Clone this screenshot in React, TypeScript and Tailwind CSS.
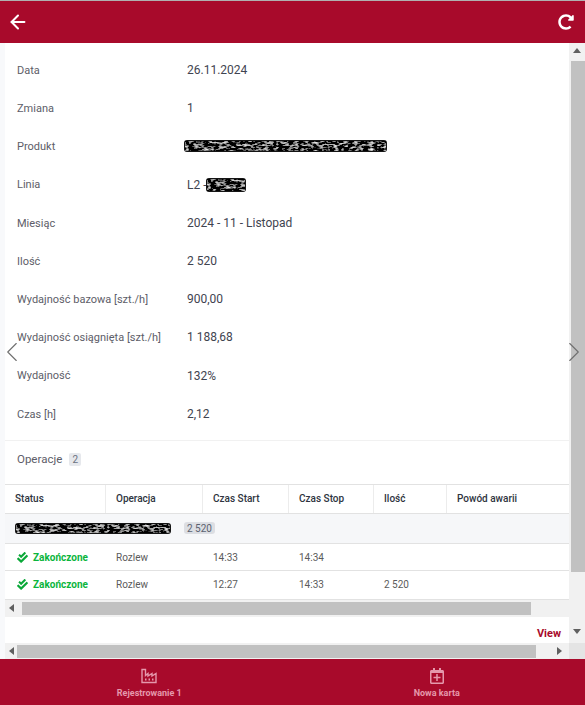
import { useId } from "react";
import { ArrowLeft, ChevronLeft, ChevronRight } from "lucide-react";
import { FaCheckDouble, FaRegCalendarPlus, FaRedoAlt } from "react-icons/fa";

const rows: [string, React.ReactNode][] = [
  ["Data", "26.11.2024"],
  ["Zmiana", "1"],
  ["Produkt", <span key="p" className="block -ml-[3px]"><Redacted width={203} height={12} /></span>],
  ["Linia", <span key="l" className="flex items-center">L2 -<span className="-ml-[1px]"><Redacted width={40} height={14} /></span></span>],
  ["Miesiąc", "2024 - 11 - Listopad"],
  ["Ilość", "2 520"],
  ["Wydajność bazowa [szt./h]", "900,00"],
  ["Wydajność osiągnięta [szt./h]", "1 188,68"],
  ["Wydajność", "132%"],
  ["Czas [h]", "2,12"],
];

function Redacted({ width, height }: { width: number; height: number }) {
  const id = useId();
  return (
    <svg width={width} height={height} className="block shrink-0 blur-[0.7px]">
      <filter id={id} x="0" y="0" width="100%" height="100%">
        <feTurbulence type="fractalNoise" baseFrequency="0.2 0.45" numOctaves="2" seed="7" />
        <feColorMatrix type="matrix" values="0 0 0 2.2 -1.05  0 0 0 2.2 -1.05  0 0 0 2.2 -1.05  0 0 0 0 1" />
      </filter>
      <rect width={width} height={height} rx={3} fill="#151515" />
      <rect x="1" y="1" width={width - 2} height={height - 2} rx={3} filter={`url(#${id})`} />
    </svg>
  );
}

function Tri({ dir }: { dir: "l" | "r" | "u" | "d" }) {
  const pts = { l: "6,1 6,9 1,5", r: "1,1 1,9 6,5", u: "1,6 9,6 5,1", d: "1,1 9,1 5,6" }[dir];
  return (
    <svg width="10" height="10" viewBox="0 0 10 10" className="shrink-0">
      <polygon points={pts} fill="#606060" />
    </svg>
  );
}

function FactoryIcon() {
  return (
    <svg width="16" height="16" viewBox="0 0 16 16" fill="none" stroke="currentColor" strokeWidth="1.4">
      <path d="M1 1.5V14.5H15V5.5L11 8V5.5L7 8V5.5L4.5 7.5V1.5Z" />
      <path d="M4 11.5h1.5M7.5 11.5H9M11 11.5h1.5" strokeWidth="2" />
    </svg>
  );
}

const cols = "grid grid-cols-[101px_97px_86px_85px_73px_122px]";

function Td({ children }: { children?: React.ReactNode }) {
  return <div className="pl-[10px] flex items-center">{children}</div>;
}

function DataRow({ start, stop, qty, h }: { start: string; stop: string; qty?: string; h: string }) {
  return (
    <div className={`${cols} ${h} border-b border-[#e2e2e2] text-[10px] text-[#5b5b5b]`}>
      <div className="pl-3 flex items-center gap-[5px] font-bold text-[#0bb53d]">
        <FaCheckDouble className="text-[11px] text-[#0aa838]" />
        Zakończone
      </div>
      <Td>Rozlew</Td>
      <Td>{start}</Td>
      <Td>{stop}</Td>
      <Td>{qty}</Td>
      <Td />
    </div>
  );
}

export default function App() {
  const font = { fontFamily: "Roboto, 'Liberation Sans', sans-serif" };
  return (
    <div className="w-[585px] h-[705px] flex flex-col overflow-hidden bg-[#f8f9fb] relative" style={font}>
      <header className="h-[43px] shrink-0 bg-[#a80a2b] border-t border-[#b0b0b0] flex items-center justify-between pl-[7px] pr-[11px] text-white">
        <ArrowLeft size={22} strokeWidth={2.2} />
        <FaRedoAlt size={16} />
      </header>

      <div className="h-[616px] shrink-0 flex">
        <div className="flex-1 min-w-0 pl-[5px] flex flex-col">
          <main className="bg-white flex-1 min-h-0 flex flex-col">
            <div className="pt-[8px]">
              {rows.map(([k, v], i) => (
                <div key={i} className="h-[38.2px] flex items-center pl-3">
                  <div className="w-[170px] pt-[2px] text-[11px] text-[#5d5d68]">{k}</div>
                  <div className="text-[12px] text-[#3f4450]">{v}</div>
                </div>
              ))}
            </div>
            <div className="mt-[7px] h-[44px] border-t border-[#f1f1f1] pl-3 pb-[5px] flex items-center gap-[7px] text-[11.5px] text-[#5d5d68]">
              Operacje
              <span className="h-[13px] w-[12px] rounded-[2px] bg-[#e6e8ec] text-[10px] text-[#6b7280] flex items-center justify-center">2</span>
            </div>
            <div className={`${cols} h-[30px] shrink-0 border-y border-[#e2e2e2] text-[10px] font-medium text-[#2e3440]`}>
              {["Status", "Operacja", "Czas Start", "Czas Stop", "Ilość", "Powód awarii"].map((t, i) => (
                <div key={t} className={`flex items-center pl-[10px] ${i < 5 ? "border-r border-[#ececec]" : ""}`}>{t}</div>
              ))}
            </div>
            <div className="h-[30px] shrink-0 bg-[#f6f7f9] border-b border-[#e2e2e2] pl-[10px] flex items-center gap-[13px]">
              <Redacted width={156} height={11} />
              <span className="h-[12px] rounded-[3px] bg-[#dcdee3] px-[3px] text-[10px] text-[#5b6270] flex items-center">2 520</span>
            </div>
            <DataRow start="14:33" stop="14:34" h="h-[27px] pt-[1px]" />
            <DataRow start="12:27" stop="14:33" qty="2 520" h="h-[29px]" />
            <div className="h-[17px] bg-[#f1f1f1] flex items-center pl-[3px] shrink-0">
              <Tri dir="l" />
              <div className="ml-1 w-[509px] h-[13px] bg-[#c1c1c1]" />
            </div>
            <div className="flex-1 flex items-end justify-end pr-2 pb-[1px] text-[11px] font-bold text-[#a80a2b]">View</div>
          </main>
          <div className="h-[16px] shrink-0 bg-[#f1f1f1] flex items-center">
            <div className="ml-[3px]"><Tri dir="l" /></div>
            <div className="ml-[-1px] w-[519px] h-[13px] bg-[#c1c1c1]" />
            <div className="ml-auto mr-[3px]"><Tri dir="r" /></div>
          </div>
        </div>
        <div className="w-[16px] shrink-0 bg-[#f1f1f1] flex flex-col">
          <div className="h-[18px] flex items-center justify-center"><Tri dir="u" /></div>
          <div className="ml-[2px] h-[511px] bg-[#c1c1c1]" />
          <div className="flex-1 flex items-start justify-center pt-[56px]"><Tri dir="d" /></div>
          <div className="h-[16px] bg-[#e4e4e4]" />
        </div>
      </div>

      <footer className="flex-1 bg-[#a80a2b] grid grid-cols-2 text-[#e598ac] text-[9px] font-bold">
        <div className="flex flex-col items-center pt-[9px] gap-[3px] pl-[6px]">
          <FactoryIcon />
          Rejestrowanie 1
        </div>
        <div className="flex flex-col items-center pt-[9px] gap-[3px] pr-[4px]">
          <FaRegCalendarPlus size={16} />
          Nowa karta
        </div>
      </footer>

      <ChevronLeft size={34} strokeWidth={0.8} className="absolute -left-[5px] top-[335px] text-[#707070]" />
      <ChevronRight size={34} strokeWidth={0.8} className="absolute left-[557px] top-[335px] text-[#707070]" />
    </div>
  );
}
